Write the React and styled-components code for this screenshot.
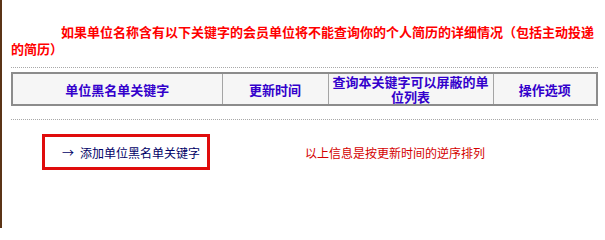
import styled, { createGlobalStyle } from "styled-components";

const GlobalStyle = createGlobalStyle`
    html, body {
        margin:0;
        padding:0;
        background:#fff;
    }
    body{
        font-family:"Noto Sans CJK SC", "Liberation Sans", sans-serif;
    }
`

const Page = styled.div`
    box-sizing:border-box;
    width:605px;
    min-height:228px;
    border-left:2px solid #5b3416;
    padding:0 7px 0 9px;
`

const Notice = styled.p`
    margin:0;
    padding-top:23px;
    font-size:13px;
    line-height:17px;
    font-weight:bold;
    color:#ff0000;
    text-indent:50px;
`

const Dotted = styled.div`
    border-top:1px dotted #a8a8a8;
    margin-top:${props => props.$top}px;
`

const HeadTable = styled.table`
    width:100%;
    margin-top:4px;
    border-collapse:collapse;
    border:2px solid #8c8c8c;
    background:#f6f6f6;
    table-layout:fixed;
`

const HeadCell = styled.th`
    box-sizing:border-box;
    width:${props => props.$w ? props.$w + 'px' : 'auto'};
    height:30px;
    padding:0 2px;
    border-left:1px solid #a5a5a5;
    color:#3300cc;
    font-size:13px;
    line-height:15px;
    font-weight:bold;
    text-align:center;
    vertical-align:middle;
    &:first-child{
        border-left:none;
    }
`

const ActionRow = styled.div`
    display:flex;
    align-items:center;
    margin-top:14px;
    padding-left:31px;
`

const AddButton = styled.a`
    box-sizing:border-box;
    display:flex;
    align-items:center;
    gap:6px;
    width:168px;
    height:36px;
    padding-left:17px;
    border:3px solid #e00c0c;
    color:#000066;
    font-size:12px;
    text-decoration:none;
    cursor:pointer;
`

const Arrow = styled.span`
    font-size:12px;
    color:#000066;
`

const SortNote = styled.span`
    margin-left:95px;
    font-size:12px;
    color:#d40000;
`

export default function App() {
    return (
        <>
            <GlobalStyle />
            <Page>
                <Notice>如果单位名称含有以下关键字的会员单位将不能查询你的个人简历的详细情况（包括主动投递的简历）</Notice>
                <Dotted $top={10} />
                <HeadTable>
                    <thead>
                        <tr>
                            <HeadCell $w={210}>单位黑名单关键字</HeadCell>
                            <HeadCell $w={106}>更新时间</HeadCell>
                            <HeadCell $w={165}>查询本关键字可以屏蔽的单位列表</HeadCell>
                            <HeadCell>操作选项</HeadCell>
                        </tr>
                    </thead>
                </HeadTable>
                <Dotted $top={13} />
                <ActionRow>
                    <AddButton>
                        <Arrow>→</Arrow>
                        添加单位黑名单关键字
                    </AddButton>
                    <SortNote>以上信息是按更新时间的逆序排列</SortNote>
                </ActionRow>
            </Page>
        </>
    )
}
